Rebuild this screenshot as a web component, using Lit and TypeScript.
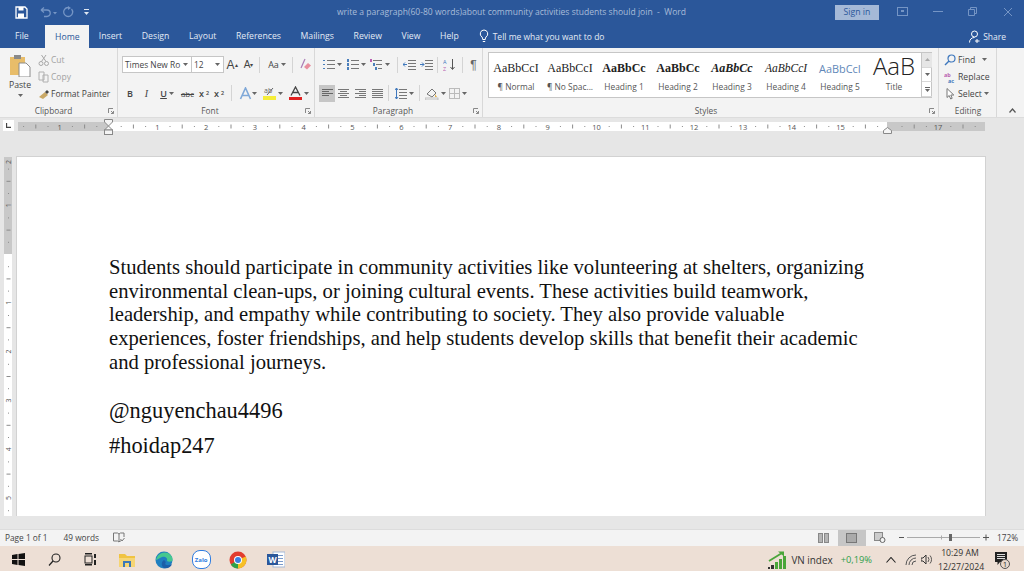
import { LitElement, html, css, svg } from "lit";
import { customElement } from "lit/decorators.js";

const caret = html`<svg class="caret" width="5" height="3" viewBox="0 0 5 3"><path d="M0 0h5L2.500 3z" fill="#666"/></svg>`;

function ic(w: number, h: number, body: unknown) {
  return html`<svg width=${w} height=${h} viewBox="0 0 ${w} ${h}" class="ic">${body}</svg>`;
}

const horizRuler = () => {
  const step = 48.8, zero = 90.5;
  const marks: unknown[] = [];
  for (let q = -7; q <= 71; q++) {
    if (q === 0) continue;
    const x = zero + (q * step) / 4;
    if (x < 4 || x > 962) continue;
    if (q % 4 === 0) {
      const n = Math.abs(q / 4);
      if (n === 16) continue;
      marks.push(svg`<text x=${x} y="7.500" text-anchor="middle" font-size="7.500" fill="#555" font-family="Open Sans, sans-serif">${n}</text>`);
    } else if (q % 2 === 0) {
      marks.push(svg`<rect x=${x} y="2.500" width="1" height="4" fill="#8c8c8c"/>`);
    } else {
      marks.push(svg`<rect x=${x} y="4" width="1" height="1" fill="#8c8c8c"/>`);
    }
  }
  return html`<svg width="967" height="9" viewBox="0 0 967 9" class="ic">
    <rect width="967" height="9" fill="#c8c8c8"/>
    <rect x="90.500" width="778.500" height="9" fill="#fff"/>
    ${marks}
  </svg>`;
};

const vertRuler = () => {
  const step = 48.8, zero = 97;
  const marks: unknown[] = [];
  for (let q = -7; q <= 21; q++) {
    if (q === 0) continue;
    const y = zero + (q * step) / 4;
    if (q % 4 === 0) {
      const n = Math.abs(q / 4);
      marks.push(svg`<text transform="translate(7 ${y}) rotate(-90)" text-anchor="middle" font-size="7" fill="#555" font-family="Open Sans, sans-serif">${n}</text>`);
    } else if (q % 2 === 0) {
      marks.push(svg`<rect x="2.500" y=${y} width="4" height="1" fill="#8c8c8c"/>`);
    } else {
      marks.push(svg`<rect x="4" y=${y} width="1" height="1" fill="#8c8c8c"/>`);
    }
  }
  marks.push(svg`<text transform="translate(7 5) rotate(-90)" text-anchor="middle" font-size="7" fill="#555" font-family="Open Sans, sans-serif">2</text>`);
  return html`<svg width="8" height="359" viewBox="0 0 8 359" class="ic">
    <rect width="8" height="359" fill="#fff"/>
    <rect width="8" height="97" fill="#c8c8c8"/>
    ${marks}
  </svg>`;
};

const lines = (n: number, x: number, w: number, y: number, dy: number, c: string) =>
  Array.from({ length: n }, (_, i) => svg`<rect x=${x} y=${y + i * dy} width=${w} height="1" fill=${c}/>`);

const styleItems = [
  ["AaBbCcI", "¶ Normal", "s-normal"],
  ["AaBbCcI", "¶ No Spac...", "s-normal"],
  ["AaBbCc", "Heading 1", "s-bold"],
  ["AaBbCc", "Heading 2", "s-bold"],
  ["AaBbCc", "Heading 3", "s-bi"],
  ["AaBbCcI", "Heading 4", "s-it"],
  ["AaBbCcI", "Heading 5", "s-blue"],
  ["AaB", "Title", "s-title"],
];

const launcher = ic(6, 6, svg`<path d="M.5 5V.5H5M3 3l2.500 2.500M5.500 3v2.500H3" fill="none" stroke="#888"/>`);

@customElement("app-root")
export class AppRoot extends LitElement {
  static styles = css`
    :host { display: block; width: 1024px; height: 571px; overflow: hidden; position: relative;
      font-family: "Open Sans", "Noto Sans", sans-serif; color: #444; background: #e6e6e6; }
    .ic { display: block; flex: none; }
    .caret { display: block; flex: none; }

    .titlebar { height: 24px; background: #2b579a; display: flex; align-items: center; color: #fff; }
    .qat { width: 326px; flex: none; display: flex; align-items: center; padding-left: 15px; box-sizing: border-box; }
    .g3 { width: 3px; flex: none; } .g10 { width: 10px; flex: none; }
    .doc-title { width: 509px; flex: none; font-size: 8.550px; color: #a8bcd9; white-space: pre; padding-left: 11px; box-sizing: border-box; }
    .signin { width: 44px; height: 15px; flex: none; background: #a5b9d7; color: #2b579a; font-size: 8.700px; text-align: center; line-height: 15px; }
    .winbtns { display: flex; margin-left: 6px; }
    .winbtn { width: 35px; display: flex; justify-content: center; }

    .tabs { height: 24px; background: #2b579a; display: flex; align-items: stretch; color: #fff; font-size: 8.700px; padding-left: 5px; box-sizing: border-box; }
    .tab { display: flex; align-items: center; padding: 0 9.800px; color: #e4ebf5; white-space: nowrap; }
    .tab.file { width: 40px; box-sizing: border-box; padding: 0 10px; }
    .tab.home { background: #f3f3f3; color: #2b579a; margin: 1px 0 0 0; width: 44px; box-sizing: border-box; padding: 0 10px; }
    .tell { display: flex; align-items: center; gap: 4px; padding-left: 10px; white-space: nowrap; color: #e4ebf5; font-size: 8.500px; }
    .share { margin-left: auto; display: flex; align-items: center; gap: 3px; padding-right: 18px; color: #e4ebf5; font-size: 8.500px; }

    .ribbon { height: 70px; background: #f3f3f3; display: flex; border-bottom: 1px solid #dcdcdc; box-sizing: border-box; position: relative; }
    .group { display: flex; flex-direction: column; border-right: 1px solid #d8d8d8; position: relative; box-sizing: border-box; height: 69px; flex: none; }
    .gbody { flex: 1; min-height: 0; display: flex; }
    .glabel { height: 15px; text-align: center; font-size: 8.300px; line-height: 17px; color: #555; flex: none; padding-right: 16px; }
    .glabel.pr10 { padding-right: 10px; } .glabel.pr14 { padding-right: 14px; } .glabel.pr4 { padding-right: 4px; }
    .launch { position: absolute; right: 3px; bottom: 3px; }

    .g-clip { width: 118px; }
    .paste { width: 38px; display: flex; flex-direction: column; align-items: center; font-size: 8.700px; color: #444; padding: 6px 0 0 2px; box-sizing: border-box; flex: none; }
    .paste span { margin-top: 2px; line-height: 12px; }
    .paste .caret { margin-top: 3px; }
    .clipcol { display: flex; flex-direction: column; padding-top: 3px; }
    .clipcol div { height: 17px; display: flex; align-items: center; gap: 2px; font-size: 8.500px; white-space: nowrap; }
    .dim { color: #a2a2a2; }

    .g-font { width: 197px; padding: 8px 0 0 4px; }
    .g-para { width: 168px; padding: 8px 0 0 5px; }
    .col { display: flex; flex-direction: column; flex: 1; }
    .rw { display: flex; align-items: center; height: 17px; }
    .rw.second { margin-top: 11px; height: 18px; }
    .combo { height: 17px; background: #fff; border: 1px solid #c6c6c6; box-sizing: border-box; display: flex; align-items: center; justify-content: space-between; padding: 0 3px 0 2px; font-size: 8.400px; color: #444; white-space: nowrap; flex: none; }
    .combo.fam { width: 70px; }
    .combo.sz { width: 33px; margin-left: -1px; }
    .tb { height: 17px; display: flex; align-items: center; justify-content: center; gap: 2px; flex: none; font-size: 9px; color: #444; box-sizing: border-box; }
    .w14 { width: 14px; } .w16 { width: 16px; } .w17 { width: 17px; } .w22 { width: 22px; } .w24 { width: 24px; } .w28 { width: 28px; }
    .on { background: #c6c6c6; margin-left: -1px; }
    .sep { width: 1px; height: 16px; background: #d4d4d4; flex: none; }
    .m23 { margin: 0 3px 0 2px; } .m13 { margin: 0 5px 0 1px; } .m57 { margin: 0 7px 0 5px; }
    .m53 { margin: 0 3px 0 5px; } .m22 { margin: 0 3px 0 2px; } .m43 { margin: 0 2px 0 4px; } .m33 { margin: 0 3px; }
    .sp1 { width: 1px; flex: none; } .sp2 { width: 2px; flex: none; } .sp6 { width: 6px; flex: none; }
    .b { font-weight: 600; } .i { font-style: italic; font-family: "Liberation Serif", serif; font-size: 10px; }
    .u { text-decoration: underline; }
    .abc { font-size: 8px; text-decoration: line-through; }
    sub, sup { font-size: 5.500px; line-height: 0; }
    .tb.a { font-size: 12px; font-family: "Liberation Sans", sans-serif; gap: 0; }
    .tb.a.sm { font-size: 10px; }
    .pil { font-size: 12px; color: #666; font-family: "Liberation Sans", sans-serif; }

    .g-styles { width: 456px; padding: 4px 0 0 5px; }
    .gallery { width: 444px; height: 46px; background: #fff; border: 1px solid #c6c6c6; box-sizing: border-box; display: flex; }
    .sitem { width: 54px; flex: none; display: flex; flex-direction: column; align-items: center; overflow: hidden; }
    .ssample { height: 27px; width: 54px; padding-top: 3px; box-sizing: border-box; display: flex; align-items: center; justify-content: center; overflow: hidden; white-space: nowrap; color: #222; font-family: "Liberation Serif", serif; font-size: 12px; flex: none; }
    .s-bold { font-weight: 700; font-size: 12px; }
    .s-bi { font-weight: 700; font-style: italic; font-size: 12px; }
    .s-it { font-style: italic; font-size: 11.500px; }
    .s-blue { color: #5f87b8; font-family: "Open Sans", sans-serif; font-size: 10.900px; }
    .s-title { font-family: "Open Sans", sans-serif; font-weight: 300; font-size: 24px; align-items: flex-start; line-height: 26px; padding-top: 0; color: #222; }
    .slabel { font-size: 8.400px; color: #555; white-space: nowrap; line-height: 12px; margin-top: 1px; }
    .gscroll { margin-left: auto; width: 11px; flex: none; display: flex; flex-direction: column; border-left: 1px solid #c6c6c6; box-sizing: border-box; }
    .gscroll div { flex: 1; display: flex; align-items: center; justify-content: center; border-bottom: 1px solid #d8d8d8; }
    .gscroll div:first-child { background: #e6e6e6; }
    .g-edit { width: 58px; padding: 3px 0 0 5px; }
    .editcol { display: flex; flex-direction: column; }
    .editcol div { height: 17px; display: flex; align-items: center; gap: 2px; font-size: 8.700px; white-space: nowrap; }
    .collapse { position: absolute; right: 8px; bottom: 4px; }

    .hruler { height: 17px; display: flex; align-items: center; background: #e6e6e6; position: relative; padding-left: 18px; box-sizing: border-box; }
    .tabstop { position: absolute; left: 3px; top: 2px; width: 11px; height: 11px; background: #fff; display: flex; align-items: center; justify-content: center; }
    .ind-l { position: absolute; left: 104px; top: 1px; }
    .ind-r { position: absolute; left: 883px; top: 9px; }

    .work { height: 381px; display: flex; align-items: flex-start; overflow: hidden; }
    .vruler { width: 17px; padding: 22px 0 0 4px; box-sizing: border-box; flex: none; }
    .page { width: 968px; flex: none; height: 359px; margin-top: 22px; background: #fff; box-shadow: 0 0 0 1px #d2d2d2; box-sizing: border-box; padding: 99px 98px 0 92px; font-family: "Liberation Serif", serif; font-size: 22.400px; color: #111; }
    .para { line-height: 23.700px; margin: 0; font-size: 20.640px; }
    .tag1 { margin: 23px 0 0; line-height: 26px; }
    .tag2 { margin: 9px 0 0; line-height: 26px; }

    .hscroll { height: 13px; background: #e6e6e6; }
    .status { height: 17px; background: #f3f3f3; display: flex; align-items: center; font-size: 8.300px; color: #444; border-top: 1px solid #dcdcdc; box-sizing: border-box; padding: 0 0 1px 5px; }
    .status .w { margin-left: 16px; }
    .status .pr { margin-left: 14px; }
    .views { margin-left: auto; display: flex; align-items: center; height: 16px; }
    .view { width: 28px; height: 16px; display: flex; align-items: center; justify-content: center; }
    .view.cur { background: #c6c6c6; }
    .zoom { display: flex; align-items: center; margin-left: 4px; }
    .pct { margin: 0 6px 0 7px; }

    .taskbar { height: 25px; background: #eddfd5; display: flex; align-items: center; color: #222; padding-top: 2px; box-sizing: border-box; }
    .tico { width: 36px; height: 23px; display: flex; align-items: center; justify-content: center; flex: none; }
    .tico.l { width: 37.250px; }
    .zalo { width: 19px; height: 19px; border-radius: 8px; background: #fff; border: 1.500px solid #2f7de1; box-sizing: border-box; color: #2f7de1; font-size: 6px; font-weight: 700; display: flex; align-items: center; justify-content: center; }
    .tray { margin-left: auto; display: flex; align-items: center; }
    .vn { margin-left: 5px; white-space: nowrap; color: #333; font-size: 9.900px; }
    .up { margin-left: 8px; color: #2e9e4a; font-size: 9.300px; white-space: nowrap; }
    .t14 { width: 14px; flex: none; } .t9 { width: 9px; flex: none; } .t4 { width: 4px; flex: none; }
    .clock { width: 44px; margin-left: 6px; text-align: center; font-size: 8.700px; line-height: 14px; color: #333; white-space: nowrap; }
    .notif { margin: 0 14px 0 12px; }
  `;

  render() {
    const dimW = "#7595c5";
    return html`
      <div class="titlebar">
        <div class="qat">
          ${ic(13, 13, svg`<path d="M1 1h9l2 2v9H1z" fill="none" stroke="#fff" stroke-width="1.300"/><rect x="3.500" y="1" width="5" height="3.500" fill="#fff"/><rect x="3" y="7.500" width="6" height="4.500" fill="#fff"/>`)}
          <span class="g10"></span>
          ${ic(13, 11, svg`<path d="M3 3h6a3.200 3.200 0 0 1 0 6.500H6M3 3l3-2.500M3 3l3 2.500" fill="none" stroke=${dimW} stroke-width="1.300"/>`)}
          ${ic(8, 11, svg`<path d="M2 5h4L4 7.500z" fill=${dimW}/>`)}
          <span class="g3"></span>
          ${ic(12, 12, svg`<path d="M9.500 3A4.500 4.500 0 1 1 6 1.500" fill="none" stroke=${dimW} stroke-width="1.300"/><path d="M6 0v4l3-2z" fill=${dimW}/>`)}
          <span class="g10"></span>
          ${ic(6, 9, svg`<rect y="1" width="5" height="1" fill="#dfe7f2"/><path d="M0 4h5L2.500 7z" fill="#dfe7f2"/>`)}
        </div>
        <div class="doc-title">write a paragraph(60-80 words)about community activities students should join  -  Word</div>
        <div class="signin">Sign in</div>
        <div class="winbtns">
          <div class="winbtn">${ic(11, 9, svg`<rect x=".5" y=".5" width="10" height="8" fill="none" stroke=${dimW}/><rect x="4" y="3" width="3" height="2" fill=${dimW}/>`)}</div>
          <div class="winbtn">${ic(10, 9, svg`<rect y="4" width="10" height="1" fill=${dimW}/>`)}</div>
          <div class="winbtn">${ic(9, 9, svg`<path d="M2.500 2V.5h6v6H7M.5 2.500h6v6h-6z" fill="none" stroke=${dimW}/>`)}</div>
          <div class="winbtn">${ic(10, 10, svg`<path d="M1 1l8 8M9 1l-8 8" stroke=${dimW} stroke-width="1"/>`)}</div>
        </div>
      </div>

      <div class="tabs">
        <div class="tab file">File</div>
        <div class="tab home">Home</div>
        ${["Insert", "Design", "Layout", "References", "Mailings", "Review", "View", "Help"].map(t => html`<div class="tab">${t}</div>`)}
        <div class="tell">
          ${ic(10, 14, svg`<path d="M5 1a3.800 3.800 0 0 0-2 7c.5.500.7 1.500.7 2.500h2.600c0-1 .2-2 .7-2.500a3.800 3.800 0 0 0-2-7zM3.800 12.500h2.400" fill="none" stroke="#fff" stroke-width="1"/>`)}
          Tell me what you want to do
        </div>
        <div class="share">
          ${ic(11, 13, svg`<circle cx="5.500" cy="4" r="3" fill="none" stroke="#fff"/><path d="M.5 12.500c0-3 2-5 5-5M8 9v4M6 11h4.500" fill="none" stroke="#fff"/>`)}
          Share
        </div>
      </div>

      <div class="ribbon">
        <div class="group g-clip">
          <div class="gbody">
            <div class="paste">
              ${ic(22, 23, svg`<rect x="1" y="3" width="15" height="18" fill="#e8bd6a"/><rect x="5" y="1" width="7" height="4" fill="#8a8a8a"/><path d="M10 9h7l4 4v10H10z" fill="#fff" stroke="#8c8c8c"/>`)}
              <span>Paste</span>
              ${caret}
            </div>
            <div class="clipcol">
              <div class="dim">${ic(11, 12, svg`<circle cx="3" cy="9.500" r="2" fill="none" stroke="#a8a8a8"/><circle cx="8.500" cy="9.500" r="2" fill="none" stroke="#a8a8a8"/><path d="M3.500 7.500L8 1M8 7.500L3.500 1" stroke="#a8a8a8"/>`)}Cut</div>
              <div class="dim">${ic(11, 12, svg`<path d="M1 1h5v8H1zM5 4h5v7H5z" fill="#f3f3f3" stroke="#b0b0b0"/>`)}Copy</div>
              <div>${ic(11, 12, svg`<path d="M1 9l6-5 3 3-5 4z" fill="#c9a866"/><path d="M7 4l2-2 2 2-2 2z" fill="#444"/>`)}Format Painter</div>
            </div>
          </div>
          <div class="glabel pr10">Clipboard</div>
          <div class="launch">${launcher}</div>
        </div>

        <div class="group g-font">
          <div class="gbody"><div class="col">
            <div class="rw">
              <div class="combo fam">Times New Ro ${caret}</div>
              <div class="combo sz">12 ${caret}</div>
              <div class="tb a w16">A<sup>▴</sup></div>
              <div class="tb a sm w17">A<sup>▾</sup></div>
              <div class="sep m23"></div>
              <div class="tb w28">Aa ${caret}</div>
              <div class="sep m13"></div>
              ${ic(13, 13, svg`<path d="M3 10L7 1" stroke="#a97bb5" stroke-width="1.200"/><path d="M6 9l4-4 3 2.500-4 4z" fill="#e88e9e"/>`)}
            </div>
            <div class="rw second">
              <div class="tb w16 b">B</div>
              <div class="tb w17 i">I</div>
              <div class="tb w24"><span class="u b">U</span> ${caret}</div>
              <div class="tb w17 abc">abc</div>
              <div class="tb w16 b">x<sub>2</sub></div>
              <div class="tb w14 b">x<sup>2</sup></div>
              <div class="sep m57"></div>
              ${ic(13, 13, svg`<path d="M1.500 12L6.500 1l5 11M3.500 8.500h6" fill="none" stroke="#7fa8d8" stroke-width="1.600"/>`)}
              ${caret}
              <span class="sp6"></span>
              ${ic(14, 14, svg`<text x="1" y="7" font-size="7" fill="#666" font-family="Open Sans, sans-serif">ab</text><path d="M4 9l6-7" stroke="#666"/><rect y="10" width="13" height="4" fill="#f5ed3a"/>`)}
              <span class="sp1"></span>${caret}
              <span class="sp6"></span>
              ${ic(13, 14, svg`<path d="M2 9.500L6.500 1 11 9.500M4 6.500h5" fill="none" stroke="#444" stroke-width="1.300"/><rect y="11" width="13" height="3" fill="#e02020"/>`)}
              <span class="sp2"></span>${caret}
            </div>
          </div></div>
          <div class="glabel">Font</div>
          <div class="launch">${launcher}</div>
        </div>

        <div class="group g-para">
          <div class="gbody"><div class="col">
            <div class="rw">
              <div class="tb w24">${ic(12, 11, svg`${lines(3, 4, 8, 1, 4, "#777")}<rect y="1" width="2" height="1" fill="#4a7ebb"/><rect y="5" width="2" height="1" fill="#4a7ebb"/><rect y="9" width="2" height="1" fill="#4a7ebb"/>`)}${caret}</div>
              <div class="tb w24">${ic(12, 11, svg`${lines(3, 4, 8, 1, 4, "#777")}<rect y="0" width="2" height="3" fill="#4a7ebb"/><rect y="4" width="2" height="3" fill="#4a7ebb"/><rect y="8" width="2" height="3" fill="#4a7ebb"/>`)}${caret}</div>
              <div class="tb w24">${ic(13, 11, svg`<rect x="3" y="1" width="9" height="1" fill="#777"/><rect x="6" y="5" width="6" height="1" fill="#777"/><rect x="8" y="9" width="4" height="1" fill="#777"/><rect y="0" width="2" height="3" fill="#b85fb0"/><rect x="3" y="4" width="2" height="3" fill="#4a7ebb"/><rect x="5" y="8" width="2" height="3" fill="#4a7ebb"/>`)}${caret}</div>
              <div class="sep m53"></div>
              <div class="tb w17">${ic(13, 11, svg`${lines(4, 5, 8, 1, 3, "#777")}<path d="M4 5.500H0M2 3.500L0 5.500l2 2" fill="none" stroke="#3f78bd"/>`)}</div>
              <div class="tb w17">${ic(13, 11, svg`${lines(4, 5, 8, 1, 3, "#777")}<path d="M0 5.500h4M2 3.500l2 2-2 2" fill="none" stroke="#3f78bd"/>`)}</div>
              <div class="sep m22"></div>
              <div class="tb w17">${ic(13, 13, svg`<text x="0" y="5.500" font-size="5.500" fill="#3f78bd" font-family="Open Sans, sans-serif">A</text><text x="0" y="12.500" font-size="5.500" fill="#b85fb0" font-family="Open Sans, sans-serif">Z</text><path d="M9.500 1v10M7.500 9l2 2.500 2-2.500" fill="none" stroke="#555"/>`)}</div>
              <div class="sep m43"></div>
              <div class="tb w17 pil">¶</div>
            </div>
            <div class="rw second">
              <div class="tb w16 on">${ic(11, 9, svg`${lines(2, 0, 11, 0, 4, "#666")}${lines(2, 0, 7, 2, 4, "#666")}`)}</div>
              <div class="tb w17">${ic(11, 9, svg`${lines(3, 0, 11, 0, 4, "#777")}${lines(2, 2, 7, 2, 4, "#777")}`)}</div>
              <div class="tb w17">${ic(11, 9, svg`${lines(3, 0, 11, 0, 4, "#777")}${lines(2, 4, 7, 2, 4, "#777")}`)}</div>
              <div class="tb w16">${ic(11, 9, svg`${lines(5, 0, 11, 0, 2, "#777")}`)}</div>
              <div class="sep m33"></div>
              <div class="tb w24">${ic(12, 11, svg`${lines(4, 4, 8, 1, 3, "#777")}<path d="M1.500 0v11M0 2l1.500-2L3 2M0 9l1.500 2L3 9" fill="none" stroke="#3f78bd"/>`)}${caret}</div>
              <div class="sep m33"></div>
              <div class="tb w24">${ic(14, 13, svg`<path d="M2 7l5-5 4 4-4 4z" fill="none" stroke="#777"/><path d="M10 7l2 3h-2z" fill="#e2b14d"/><rect x="0" y="11" width="13" height="2" fill="none" stroke="#aaa" stroke-width=".7"/>`)}${caret}</div>
              <div class="tb w22">${ic(11, 11, svg`<rect x=".5" y=".5" width="10" height="10" fill="none" stroke="#bbb"/><path d="M5.500 0v11M0 5.500h11" stroke="#bbb"/>`)}${caret}</div>
            </div>
          </div></div>
          <div class="glabel">Paragraph</div>
          <div class="launch">${launcher}</div>
        </div>

        <div class="group g-styles">
          <div class="gbody">
            <div class="gallery">
              ${styleItems.map(s => html`<div class="sitem"><div class="ssample ${s[2]}">${s[0]}</div><div class="slabel">${s[1]}</div></div>`)}
              <div class="gscroll">
                <div>${ic(5, 3, svg`<path d="M0 3h5L2.500 0z" fill="#aaa"/>`)}</div>
                <div>${caret}</div>
                <div>${ic(5, 5, svg`<rect width="5" height="1" fill="#666"/><path d="M0 2h5L2.500 5z" fill="#666"/>`)}</div>
              </div>
            </div>
          </div>
          <div class="glabel pr14">Styles</div>
          <div class="launch">${launcher}</div>
        </div>

        <div class="group g-edit">
          <div class="gbody">
            <div class="editcol">
              <div>${ic(12, 12, svg`<circle cx="7.500" cy="4.500" r="3.500" fill="none" stroke="#3f78bd" stroke-width="1.200"/><path d="M5 7L1 11" stroke="#3f78bd" stroke-width="1.500"/>`)}Find&nbsp;&nbsp;${caret}</div>
              <div>${ic(12, 12, svg`<text x="0" y="5.500" font-size="5.500" fill="#b85fb0" font-family="Open Sans, sans-serif" font-weight="700">ab</text><text x="4" y="12" font-size="5.500" fill="#3f78bd" font-family="Open Sans, sans-serif" font-weight="700">ac</text>`)}Replace</div>
              <div>${ic(12, 12, svg`<path d="M3 .5v9l2.200-2 1.500 3.500 1.500-.7L6.800 7h3z" fill="#fff" stroke="#777"/>`)}Select${caret}</div>
            </div>
          </div>
          <div class="glabel pr4">Editing</div>
        </div>
        <div class="collapse">${ic(7, 5, svg`<path d="M.5 4.500L3.500 1l3 3.500" fill="none" stroke="#555" stroke-width="1.200"/>`)}</div>
      </div>

      <div class="hruler">
        <div class="tabstop">${ic(5, 5, svg`<path d="M.5 0v4.500H5" fill="none" stroke="#444" stroke-width="1.300"/>`)}</div>
        ${horizRuler()}
        <div class="ind-l">${ic(9, 16, svg`<path d="M.5.500h8v2.500L4.500 7 .5 3z M.5 11l4-4 4 4z" fill="#f5f5f5" stroke="#888"/><rect x=".5" y="11" width="8" height="4.500" fill="#f5f5f5" stroke="#888"/>`)}</div>
        <div class="ind-r">${ic(9, 7, svg`<path d="M.5 6.500v-3l4-3 4 3v3z" fill="#f5f5f5" stroke="#888"/>`)}</div>
      </div>

      <div class="work">
        <div class="vruler">${vertRuler()}</div>
        <div class="page">
          <p class="para">Students should participate in community activities like volunteering at shelters, organizing environmental clean-ups, or joining cultural events. These activities build teamwork, leadership, and empathy while contributing to society. They also provide valuable experiences, foster friendships, and help students develop skills that benefit their academic and professional journeys.</p>
          <p class="tag1">@nguyenchau4496</p>
          <p class="tag2">#hoidap247</p>
        </div>
      </div>
      <div class="hscroll"></div>

      <div class="status">
        <span>Page 1 of 1</span>
        <span class="w">49 words</span>
        <span class="pr">${ic(12, 11, svg`<path d="M.5 1h4l1.500 1v8L4.500 9h-4zM6 2l1.500-1H11v4M6 10l1-1h1" fill="none" stroke="#777"/><path d="M7.500 7l1.500 2 2.500-3" fill="none" stroke="#777"/>`)}</span>
        <div class="views">
          <div class="view">${ic(11, 10, svg`<rect x=".5" y=".5" width="4" height="9" fill="#b5b5b5" stroke="#888"/><rect x="6.500" y=".5" width="4" height="9" fill="#b5b5b5" stroke="#888"/>`)}</div>
          <div class="view cur">${ic(11, 10, svg`<rect x=".5" y=".5" width="10" height="9" fill="#aaa" stroke="#777"/>`)}</div>
          <div class="view">${ic(12, 11, svg`<rect x=".5" y=".5" width="8" height="8" fill="#ccc" stroke="#888"/><circle cx="8.500" cy="8" r="2.500" fill="#f3f3f3" stroke="#666"/>`)}</div>
        </div>
        <div class="zoom">
          ${ic(92, 11, svg`<rect x="1" y="5" width="5" height="1" fill="#555"/><rect x="9" y="5" width="73" height="1" fill="#aaa"/><rect x="51" y="2" width="3" height="7" fill="#666"/><rect x="43" y="3.500" width="1" height="4" fill="#aaa"/><path d="M85 5.500h6M88 2.500v6" stroke="#555"/>`)}
          <span class="pct">172%</span>
        </div>
      </div>

      <div class="taskbar">
        <div class="tico">${ic(13, 13, svg`<path d="M0 2l5.500-1v5H0zM6.500 1L13 0v6H6.500zM0 7h5.500v5L0 11zM6.500 7H13v6l-6.500-1z" fill="#111"/>`)}</div>
        <div class="tico">${ic(13, 13, svg`<circle cx="8" cy="5" r="4" fill="none" stroke="#222" stroke-width="1.100"/><path d="M5 8l-4 4.500" stroke="#222" stroke-width="1.200"/>`)}</div>
        <div class="tico">${ic(13, 13, svg`<rect x="1" y="3" width="7" height="7" fill="none" stroke="#222"/><rect x="1" y="0" width="7" height="1.500" fill="#222"/><rect x="1" y="11" width="7" height="1.500" fill="#222"/><rect x="10" y="1" width="2" height="4" fill="#222"/><rect x="10" y="7" width="2" height="5" fill="#222"/>`)}</div>
        <div class="tico l">${ic(16, 14, svg`<path d="M0 1h6l2 2h8v11H0z" fill="#f0c341"/><rect y="5" width="16" height="9" fill="#f6d574"/><rect x="4" y="8" width="8" height="6" fill="#3b78b8"/><rect x="6" y="10" width="4" height="4" fill="#f6d574"/>`)}</div>
        <div class="tico l">${ic(18, 18, svg`<circle cx="9" cy="9" r="8.500" fill="#1f7fc0"/><path d="M1 9C2 3 8 0 13 2c3 1.500 5 4.500 4.500 7.500-1 1.500-4 1.500-5.500.5 1-3-2-5-5-4-3 1-5 3-6 3z" fill="#46c88f"/><path d="M9 17c-3-2-3-6 0-8 2 1 2 3 1 4 2 2 5 1 7 0-1 3-4 5-8 4z" fill="#1c5ea8"/>`)}</div>
        <div class="tico l"><div class="zalo">Zalo</div></div>
        <div class="tico l">${ic(18, 18, svg`<circle cx="9" cy="9" r="8.500" fill="#e23d2e"/><path d="M9 9L1.800 13.500A8.500 8.500 0 0 0 9 17.500z" fill="#2ea24b"/><path d="M9 9l7.700-3.500A8.500 8.500 0 0 1 9 17.500z" fill="#f6c026"/><circle cx="9" cy="9" r="4" fill="#fff"/><circle cx="9" cy="9" r="3" fill="#3c7fe0"/>`)}</div>
        <div class="tico l">${ic(18, 17, svg`<rect x="6" y="1" width="12" height="15" fill="#fff" stroke="#a5b9d7"/>${lines(4, 11, 5, 4, 3, "#7a9acb")}<rect x="0" y="3" width="11" height="11" fill="#2b579a"/><text x="5.500" y="11.500" text-anchor="middle" font-size="8.500" font-weight="700" fill="#fff" font-family="Open Sans, sans-serif">W</text>`)}</div>
        <div class="tray">
          ${ic(18, 19, svg`<path d="M14 3L1 11" stroke="#4aa63a" stroke-width="1.800"/><path d="M10 1.500h6v5z" fill="#4aa63a"/><rect x="11" y="9" width="3" height="10" fill="#4aa63a"/><rect x="7" y="12" width="3" height="7" fill="#4aa63a"/><rect x="15" y="6" width="3" height="13" fill="#4aa63a"/><rect x="3" y="15" width="3" height="4" fill="#333"/><rect y="17" width="2" height="2" fill="#333"/>`)}
          <span class="vn">VN index</span>
          <span class="up">+0,19%</span>
          <span class="t14"></span>
          ${ic(10, 6, svg`<path d="M.5 5.500l4.500-5 4.500 5" fill="none" stroke="#222" stroke-width="1.100"/>`)}
          <span class="t9"></span>
          ${ic(12, 11, svg`<path d="M1 11a10 10 0 0 1 10-10M4 11a7 7 0 0 1 7-7M7 11a4 4 0 0 1 4-4" fill="none" stroke="#555"/>`)}
          <span class="t4"></span>
          ${ic(11, 11, svg`<path d="M0 4h2l3-3v9L2 7H0z" fill="none" stroke="#333"/><path d="M7 3a4 4 0 0 1 0 5M9 1.500a6 6 0 0 1 0 8" fill="none" stroke="#333" stroke-width=".8"/>`)}
          <div class="clock">10:29 AM<br />12/27/2024</div>
          <div class="notif">${ic(16, 18, svg`<path d="M1 1h12v10H6l-2.500 3V11H1z" fill="#222"/>${lines(3, 3, 8, 3, 2, "#ddd")}<circle cx="11" cy="13" r="4.500" fill="#e8d8cc" stroke="#555"/><text x="11" y="15.500" text-anchor="middle" font-size="7" fill="#222" font-family="Open Sans, sans-serif">1</text>`)}</div>
        </div>
      </div>
    `;
  }
}
